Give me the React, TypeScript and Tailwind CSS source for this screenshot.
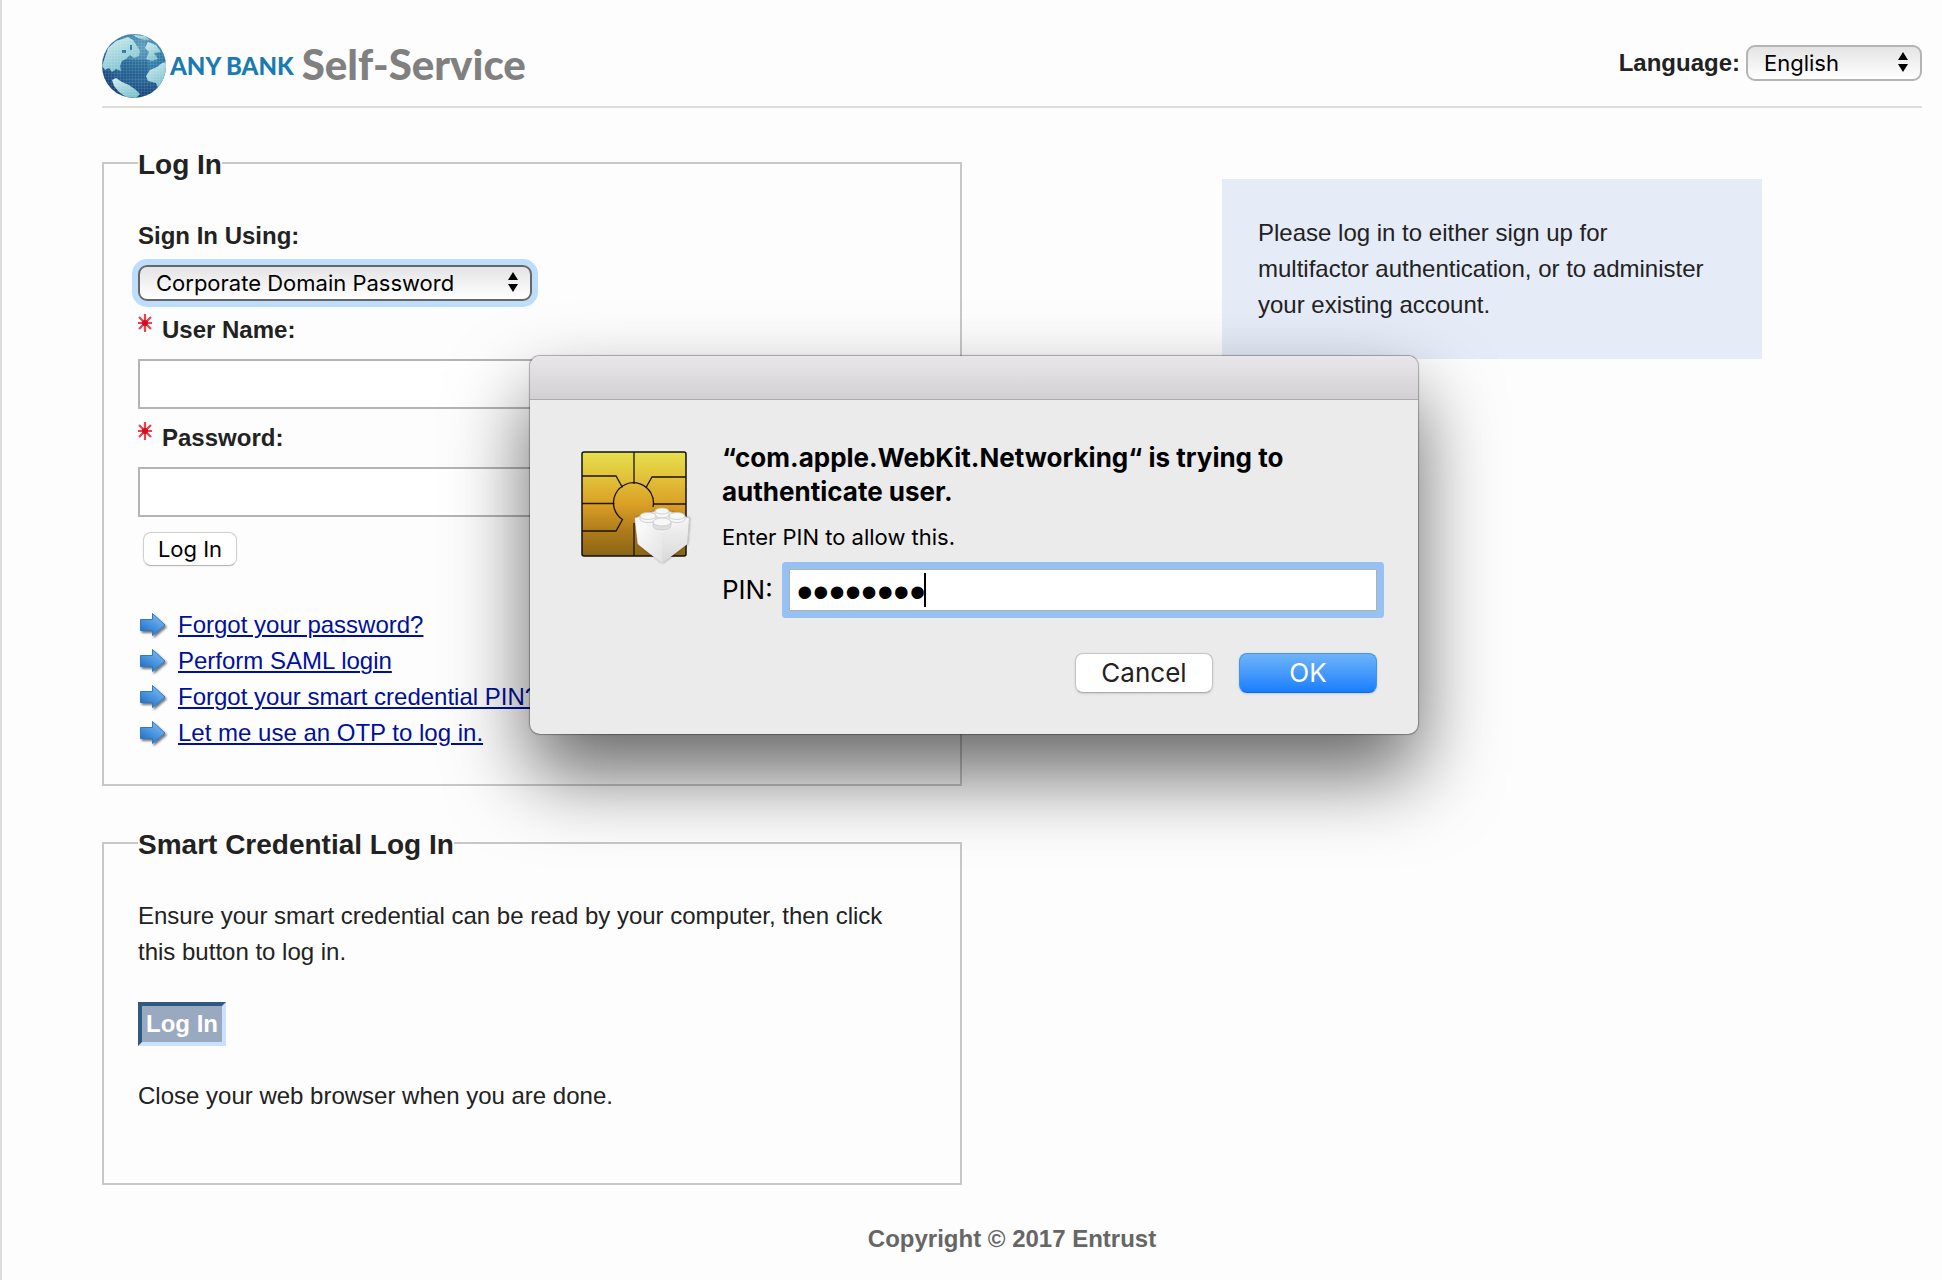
import React, { useState } from "react";

const Globe = () => (
  <svg width="64" height="64" viewBox="0 0 64 64" aria-hidden="true">
    <defs>
      <radialGradient id="sea" cx="0.62" cy="0.2" r="0.85">
        <stop offset="0" stopColor="#5f9fbd" />
        <stop offset="0.45" stopColor="#2f77a5" />
        <stop offset="1" stopColor="#153a72" />
      </radialGradient>
      <linearGradient id="land" x1="0" y1="0" x2="0.5" y2="1">
        <stop offset="0" stopColor="#d3edf0" />
        <stop offset="1" stopColor="#7fc3cf" />
      </linearGradient>
      <pattern id="mesh" width="3" height="3" patternUnits="userSpaceOnUse">
        <path d="M0 0H3M0 0V3" stroke="#ffffff" strokeOpacity="0.16" strokeWidth="1" />
      </pattern>
      <clipPath id="ball">
        <circle cx="32" cy="32" r="32" />
      </clipPath>
    </defs>
    <g clipPath="url(#ball)">
      <rect width="64" height="64" fill="url(#sea)" />
      <path d="M20 26H46V44H20Z" fill="#174a7e" opacity="0.35" />
      <g fill="url(#land)">
        <path d="M2 26L6 14L14 7L26 3L31 6L35 12L38 17L37 22L32 24L28 21L24 25L20 27L18 32L19 37L14 35L10 38L7 34L3 36L0 32Z" />
        <path d="M10 46L14 44L20 48L27 51L34 56L38 60L34 64L24 63L17 58L12 52Z" />
        <path d="M46 8L54 11L59 18L52 19L56 25L50 27L44 25L47 18L43 14Z" />
        <path d="M48 36L55 33L60 29L64 28L64 42L60 52L56 54L54 49L46 47L44 42Z" />
        <path d="M31 1L43 2L48 6L42 6L36 4Z" />
      </g>
      <path d="M20 16H24V19H20ZM28 11H30V16H28Z" fill="#2f77a5" />
      <rect width="64" height="64" fill="url(#mesh)" />
    </g>
  </svg>
);

const Required = () => (
  <svg className="mt-0.5 shrink-0" width="14" height="18" viewBox="0 0 14 18" aria-hidden="true">
    <path d="M7 0V18M0 9H14M1 3L13 15M13 3L1 15" stroke="#e4434e" strokeWidth="2.200" />
    <circle cx="7" cy="9" r="3" fill="#dc0a1e" />
  </svg>
);

const Arrow = () => (
  <svg className="shrink-0" width="30" height="28" viewBox="0 0 30 28" aria-hidden="true">
    <defs>
      <linearGradient id="arrowFill" x1="0" y1="1" x2="0.7" y2="0">
        <stop offset="0" stopColor="#1565b8" />
        <stop offset="0.5" stopColor="#4591dc" />
        <stop offset="1" stopColor="#7db9f0" />
      </linearGradient>
      <filter id="arrowShadow" x="-20%" y="-20%" width="150%" height="150%">
        <feDropShadow dx="1.5" dy="2" stdDeviation="1" floodOpacity="0.55" />
      </filter>
    </defs>
    <path
      d="M2.500 8.500H14.500V2.500L27 14L14.500 24.500V19.500H2.500Z"
      fill="url(#arrowFill)"
      stroke="#2f79c6"
      filter="url(#arrowShadow)"
    />
  </svg>
);

const Chip = () => (
  <svg width="112" height="116" viewBox="0 0 112 116" aria-hidden="true">
    <defs>
      <linearGradient id="gold" x1="0" y1="0" x2="0" y2="1">
        <stop offset="0" stopColor="#e6e04d" />
        <stop offset="0.22" stopColor="#e2c53c" />
        <stop offset="0.5" stopColor="#dba026" />
        <stop offset="0.75" stopColor="#b07c1b" />
        <stop offset="1" stopColor="#8a6414" />
      </linearGradient>
      <linearGradient id="brickLeft" x1="0" y1="0" x2="1" y2="1">
        <stop offset="0" stopColor="#ffffff" />
        <stop offset="1" stopColor="#e2e2e2" />
      </linearGradient>
      <linearGradient id="brickRight" x1="0" y1="0" x2="0" y2="1">
        <stop offset="0" stopColor="#f4f4f4" />
        <stop offset="1" stopColor="#d9d9d9" />
      </linearGradient>
      <filter id="brickShadow" x="-20%" y="-20%" width="140%" height="140%">
        <feDropShadow dx="0.500" dy="0" stdDeviation="1" floodOpacity="0.35" />
      </filter>
    </defs>
    <rect x="1" y="1" width="104" height="104" rx="2" fill="url(#gold)" stroke="#111" strokeWidth="1.500" />
    <g fill="none" stroke="#1a1405" strokeWidth="1.300">
      <path d="M53 1V33M53 72V105" />
      <path d="M1 25H35L41.500 36.500M105 26H71L65 36.500" />
      <path d="M1 52.500H33.500M72.500 53H105" />
      <path d="M1 80H35L41.500 68.500A20 20 0 1 1 72 56" />
    </g>
    <g filter="url(#brickShadow)">
      <path d="M54 67L81 58L108 67L106 93L81 112L57 93Z" fill="#f3f3f3" stroke="#bdbdbd" strokeWidth="0.800" />
      <path d="M54 67L81 82V112L57 93Z" fill="url(#brickLeft)" />
      <path d="M108 67L81 82V112L106 93Z" fill="url(#brickRight)" />
    </g>
    <g fill="#f7f7f7" stroke="#c9c9c9" strokeWidth="0.800">
      <path d="M74 60V63.500A7 3.500 0 0 0 88 63.500V60" />
      <ellipse cx="81" cy="60" rx="7" ry="3" />
      <path d="M59 65V68A8 3.500 0 0 0 75 68V65" />
      <ellipse cx="67" cy="65" rx="8" ry="3.500" />
      <path d="M88 65V68A8 3.500 0 0 0 104 68V65" />
      <ellipse cx="96" cy="65" rx="8" ry="3.500" />
      <path d="M72 71V75A9 4 0 0 0 90 75V71" fill="#dedede" />
      <ellipse cx="81" cy="71" rx="9" ry="4" />
    </g>
  </svg>
);

interface PickerProps {
  id: string;
  options: string[];
  className: string;
}

const Picker = ({ id, options, className }: PickerProps) => (
  <div className="relative w-fit">
    <select
      id={id}
      className={`block appearance-none h-9 rounded-[9px] border-2 bg-linear-to-b from-[#e4e4e4] to-white pl-4 pr-10 font-['Inter',sans-serif] text-[22px] leading-8 text-black outline-none ${className}`}
    >
      {options.map((option) => (
        <option key={option}>{option}</option>
      ))}
    </select>
    <svg
      className="pointer-events-none absolute right-3.5 top-[7px]"
      width="10"
      height="20"
      viewBox="0 0 10 20"
      aria-hidden="true"
    >
      <path d="M5 0L10 8H0ZM5 20L10 12H0Z" fill="black" />
    </svg>
  </div>
);

const links = [
  "Forgot your password?",
  "Perform SAML login",
  "Forgot your smart credential PIN?",
  "Let me use an OTP to log in.",
];

const PinDialog = () => {
  const [pin, setPin] = useState<string>("12345678");

  return (
    <div className="absolute inset-x-0 top-[356px] flex justify-center pl-1">
      <div
        role="dialog"
        aria-labelledby="pin-title"
        className="w-[888px] overflow-hidden rounded-[10px] bg-[#ebebeb] font-['Inter',sans-serif] text-black shadow-[0_0_1px_1px_rgba(0,0,0,0.3),0_40px_80px_rgba(0,0,0,0.6)]"
      >
        <div className="h-11 border-b border-[#adabad] bg-linear-to-b from-[#e9e7ea] to-[#d2d0d3]"></div>
        <div className="flex gap-[29px] pt-[41px] pr-[41px] pb-[41px] pl-[51px]">
          <div className="pt-2.5">
            <Chip />
          </div>
          <div className="grow">
            <h2 id="pin-title" className="text-[26px] leading-[34px] font-bold">
              “com.apple.WebKit.Networking“ is trying to
              <br />
              authenticate user.
            </h2>
            <p className="mt-3 text-[22px] leading-8">Enter PIN to allow this.</p>
            <div className="mt-4 flex items-center gap-4">
              <label htmlFor="pin" className="text-[26px] leading-[42px]">
                PIN:
              </label>
              <div className="relative grow">
                <input
                  id="pin"
                  type="password"
                  value={pin}
                  onChange={(e) => setPin(e.target.value)}
                  className="block h-[42px] w-full rounded-[1px] border border-[#b0b0b0] bg-white pt-1 pl-[7px] font-['Liberation_Sans',Arial,sans-serif] text-[46px] caret-transparent shadow-[0_0_0_7px_#97c1f3] outline-none"
                />
                <span className="absolute top-1 left-[135px] h-[34px] w-0.5 bg-black"></span>
              </div>
            </div>
            <div className="mt-[42px] flex justify-end gap-[26px] text-[26px]">
              <button className="h-10 w-[138px] rounded-lg border border-[#c4c4c4] border-b-[#adadad] bg-white leading-9 text-[#222] shadow-sm">
                Cancel
              </button>
              <button className="h-10 w-[138px] rounded-lg border border-[#3c93f5] border-b-[#1268f0] bg-linear-to-b from-[#6db3f8] to-[#147efd] leading-9 text-white shadow-sm">
                OK
              </button>
            </div>
          </div>
        </div>
      </div>
    </div>
  );
};

export default function App() {
  return (
    <div className="relative min-h-screen overflow-hidden border-l-2 border-[#dcdcdc] bg-[#fdfdfd] pr-5 pl-[100px] font-['Liberation_Sans',Arial,sans-serif] text-2xl leading-9 text-[#222]">
      <header className="flex h-[108px] items-start justify-between border-b-2 border-[#dcdcdc] pt-[34px]">
        <h1 className="flex h-16 items-center gap-1 font-['Lato',sans-serif] font-black">
          <Globe />
          <span className="text-2xl text-[#1a7bb3]">ANY BANK</span>
          <span className="ml-1 pb-1 text-[42px] text-[#808080]">Self-Service</span>
        </h1>
        <div className="flex items-center gap-1.5 pt-[11px]">
          <label htmlFor="language" className="font-bold">
            Language:
          </label>
          <Picker id="language" options={["English"]} className="w-44 border-[#b4b4b4]" />
        </div>
      </header>

      <main className="grid grid-cols-[43fr_13fr_27fr_8fr] items-start">
        <div className="pt-[35px]">
          <fieldset className="border-2 border-[#c8c8c8] px-[34px] pb-[33px]">
            <legend className="pt-1 text-[28px] font-bold">Log In</legend>
            <form className="pt-[35px]" onSubmit={(e) => e.preventDefault()}>
              <label htmlFor="method" className="block font-bold">
                Sign In Using:
              </label>
              <div className="mt-[11px]">
                <Picker
                  id="method"
                  options={["Corporate Domain Password"]}
                  className="w-[394px] border-[#666] shadow-[0_0_0_6px_#bdddfd]"
                />
              </div>
              <label htmlFor="username" className="mt-[11px] flex gap-2.5 font-bold">
                <Required />
                User Name:
              </label>
              <input id="username" type="text" className="mt-[11px] block h-[50px] w-[440px] border-2 border-[#b4b4b4] bg-white px-2" />
              <label htmlFor="password" className="mt-[11px] flex gap-2.5 font-bold">
                <Required />
                Password:
              </label>
              <input id="password" type="password" className="mt-[11px] block h-[50px] w-[440px] border-2 border-[#b4b4b4] bg-white px-2" />
              <button className="mt-[15px] ml-[5px] block h-[34px] w-[94px] rounded-lg border border-[#cfcfcf] border-b-[#b5b5b5] bg-white font-['Inter',sans-serif] text-[22px] leading-8 text-black shadow-xs">
                Log In
              </button>
            </form>
            <ul className="mt-[41px]">
              {links.map((link) => (
                <li key={link} className="flex items-center gap-2.5">
                  <Arrow />
                  <a href="#" className="text-[#00109c] underline decoration-2 underline-offset-2">
                    {link}
                  </a>
                </li>
              ))}
            </ul>
          </fieldset>

          <fieldset className="mt-[37px] border-2 border-[#c8c8c8] px-[34px] pb-[69px]">
            <legend className="pt-1 text-[28px] font-bold">Smart Credential Log In</legend>
            <p className="pt-[35px]">
              Ensure your smart credential can be read by your computer, then click this button to log in.
            </p>
            <button className="my-8 block h-11 border-4 border-t-[#33587f] border-r-[#cce0ff] border-b-[#cce0ff] border-l-[#33587f] bg-[#99a9bf] px-1 font-bold text-white">
              Log In
            </button>
            <p>Close your web browser when you are done.</p>
          </fieldset>
        </div>

        <aside className="col-start-3 mt-[71px] bg-[#e5ebf7] py-9 pr-12 pl-9">
          Please log in to either sign up for multifactor authentication, or to administer your existing account.
        </aside>
      </main>

      <footer className="pt-9 text-center font-bold text-[#666]">Copyright © 2017 Entrust</footer>

      <PinDialog />
    </div>
  );
}
